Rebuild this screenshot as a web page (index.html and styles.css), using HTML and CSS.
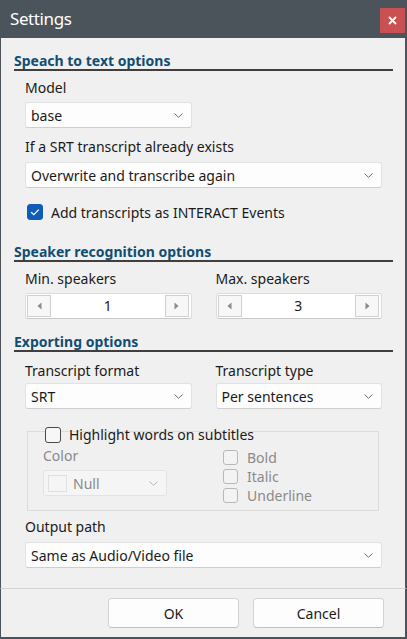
FILE: index.html
```html
<!DOCTYPE html>
<html>
<head>
<meta charset="utf-8">
<link rel="stylesheet" href="styles.css">
</head>
<body>
<div class="window">
  <div class="titlebar">
    <span class="title">Settings</span>
    <div class="close"><svg width="9" height="9" viewBox="0 0 9 9"><path d="M1 1L8 8M8 1L1 8" stroke="#fff" stroke-width="1.8"/></svg></div>
  </div>
  <div class="content">
    <div class="section s1">Speach to text options</div>
    <div class="field">
      <div class="label m7">Model</div>
      <div class="grid2 m4">
        <div class="combo"><span>base</span><svg class="chev" width="9" height="5" viewBox="0 0 9 5"><path d="M0.5 0.5L4.5 4.3L8.5 0.5" fill="none" stroke="#6b6b6b"/></svg></div>
      </div>
      <div class="label m9">If a SRT transcript already exists</div>
      <div class="combo m5"><span>Overwrite and transcribe again</span><svg class="chev" width="9" height="5" viewBox="0 0 9 5"><path d="M0.5 0.5L4.5 4.3L8.5 0.5" fill="none" stroke="#6b6b6b"/></svg></div>
      <div class="checkrow m14">
        <span class="cb checked"><svg width="16" height="16" viewBox="0 0 16 16"><path d="M4.2 8.2L6.8 10.7L11.8 5.6" fill="none" stroke="#fff" stroke-width="1.3"/></svg></span>
        <span>Add transcripts as INTERACT Events</span>
      </div>
    </div>

    <div class="section s2">Speaker recognition options</div>
    <div class="field">
      <div class="grid2 m7">
        <div class="label">Min. speakers</div>
        <div class="label">Max. speakers</div>
      </div>
      <div class="grid2 m4">
        <div class="spin">
          <span class="sbtn"><svg width="5" height="8" viewBox="0 0 5 8"><path d="M4.5 0.5V7.5L0.5 4Z" fill="#8a8a8a"/></svg></span>
          <span class="sval">1</span>
          <span class="sbtn"><svg width="5" height="8" viewBox="0 0 5 8"><path d="M0.5 0.5V7.5L4.5 4Z" fill="#8a8a8a"/></svg></span>
        </div>
        <div class="spin">
          <span class="sbtn"><svg width="5" height="8" viewBox="0 0 5 8"><path d="M4.5 0.5V7.5L0.5 4Z" fill="#8a8a8a"/></svg></span>
          <span class="sval">3</span>
          <span class="sbtn"><svg width="5" height="8" viewBox="0 0 5 8"><path d="M0.5 0.5V7.5L4.5 4Z" fill="#8a8a8a"/></svg></span>
        </div>
      </div>
    </div>

    <div class="section s3">Exporting options</div>
    <div class="field">
      <div class="grid2 m9">
        <div class="label">Transcript format</div>
        <div class="label">Transcript type</div>
      </div>
      <div class="grid2 m2">
        <div class="combo"><span>SRT</span><svg class="chev" width="9" height="5" viewBox="0 0 9 5"><path d="M0.5 0.5L4.5 4.3L8.5 0.5" fill="none" stroke="#6b6b6b"/></svg></div>
        <div class="combo"><span>Per sentences</span><svg class="chev" width="9" height="5" viewBox="0 0 9 5"><path d="M0.5 0.5L4.5 4.3L8.5 0.5" fill="none" stroke="#6b6b6b"/></svg></div>
      </div>
      <div class="group">
        <div class="ghead">
          <span class="cb"></span>
          <span>Highlight words on subtitles</span>
        </div>
        <div class="gbody">
          <div class="gleft">
            <div class="label dis">Color</div>
            <div class="combo disabled m4"><span class="swatch"></span><span class="dis">Null</span><svg class="chev" width="9" height="5" viewBox="0 0 9 5"><path d="M0.5 0.5L4.5 4.3L8.5 0.5" fill="none" stroke="#b5b5b5"/></svg></div>
          </div>
          <div class="gright">
            <div class="drow"><span class="cb dcb"></span><span class="dis">Bold</span></div>
            <div class="drow"><span class="cb dcb"></span><span class="dis">Italic</span></div>
            <div class="drow"><span class="cb dcb"></span><span class="dis">Underline</span></div>
          </div>
        </div>
      </div>
      <div class="label m6">Output path</div>
      <div class="combo m5"><span>Same as Audio/Video file</span><svg class="chev" width="9" height="5" viewBox="0 0 9 5"><path d="M0.5 0.5L4.5 4.3L8.5 0.5" fill="none" stroke="#6b6b6b"/></svg></div>
    </div>
  </div>
  <div class="footer">
    <div class="btn">OK</div>
    <div class="btn">Cancel</div>
  </div>
</div>
</body>
</html>
```

FILE: styles.css
```css
* { box-sizing: border-box; }
html, body { margin: 0; padding: 0; background: #f0f0f0; }
body { font-family: "Noto Sans", "Open Sans", sans-serif; font-size: 14px; color: #1a1a1a; }

.window { width: 407px; height: 639px; display: flex; flex-direction: column; background: #f0f0f0; }

.titlebar { height: 38px; flex: none; background: #4b535b; display: flex; align-items: center; padding-left: 10px; }
.title { color: #fff; font-size: 17px; letter-spacing: -0.4px; line-height: 22px; margin-top: -1px; }
.close { margin-left: auto; margin-right: 2px; width: 25px; height: 25px; background: #c95151; display: flex; align-items: center; justify-content: center; margin-top: 5px; margin-bottom: 3px; }

.content { flex: 1; border-left: 1px solid #4b535b; border-right: 2px solid #4b535b; padding: 0 12px 0 13px; }

.section { font-weight: bold; color: #114e73; line-height: 16px; padding-top: 1px; border-bottom: 2px solid #3f3f3f; }
.s1 { margin-top: 14px; }
.s2 { margin-top: 21px; }
.s3 { margin-top: 14px; }

.field { margin: 0 11px; }
.label { line-height: 20px; white-space: nowrap; }
.m2 { margin-top: 2px; } .m4 { margin-top: 4px; } .m5 { margin-top: 5px; } .m6 { margin-top: 6px; }
.m7 { margin-top: 7px; } .m9 { margin-top: 9px; } .m14 { margin-top: 14px; }

.grid2 { display: grid; grid-template-columns: 1fr 1fr; column-gap: 24px; }

.combo { height: 26px; background: #fdfdfd; border: 1px solid #e2e2e2; border-bottom-color: #cfcfcf; border-radius: 3px; display: flex; align-items: center; padding: 0 8px 0 5px; white-space: nowrap; }
.combo .chev { margin-left: auto; }
.combo.disabled { width: 124px; background: #f5f5f5; border-color: #e3e3e3; padding-left: 4px; }
.swatch { width: 19px; height: 17px; border: 1px solid #e0e0e0; background: #f5f5f5; margin-right: 6px; }

.checkrow { display: flex; align-items: center; height: 20px; padding-left: 2px; }
.cb { width: 16px; height: 16px; border: 1px solid #4a4a4a; border-radius: 3px; background: #f7f7f7; flex: none; }
.cb.checked { background: #0f5cb6; border-color: #0f5cb6; display: flex; }
.cb.checked svg { margin: -1px; }
.checkrow .cb { margin-right: 8px; }

.spin { height: 26px; background: #fff; border: 1px solid #dcdcdc; border-bottom-color: #c8c8c8; border-radius: 3px; display: flex; align-items: center; padding: 0 2px 0 1px; }
.sbtn { width: 24px; height: 22px; border: 1px solid #d0d0d0; background: #f7f7f7; display: flex; align-items: center; justify-content: center; flex: none; }
.sval { flex: 1; text-align: center; line-height: 20px; }

.group { margin: 22px 3px 0 2px; height: 80px; border: 1px solid #dcdcdc; }
.ghead { display: flex; align-items: center; height: 16px; margin-top: -5px; padding-left: 17px; line-height: 16px; }
.ghead .cb { margin-right: 8px; }
.gbody { display: flex; padding-left: 15px; }
.gleft { margin-top: 3px; width: 180px; }
.gright { margin-top: 5px; }
.drow { height: 19px; display: flex; align-items: center; line-height: 19px; }
.dcb { width: 15px; height: 15px; border-color: #b8b8b8; background: #f3f3f3; margin-right: 9px; }
.dis { color: #8a8a8a; }

.footer { height: 51px; flex: none; border-left: 1px solid #4b535b; border-right: 2px solid #4b535b; border-bottom: 2px solid #4b535b; border-top: 1px solid #d4d4d4; display: flex; justify-content: flex-end; padding: 9px 21px 0 0; gap: 14px; }
.btn { width: 131px; height: 30px; background: #fdfdfd; border: 1px solid #d3d3d3; border-bottom-color: #c0c0c0; border-radius: 4px; display: flex; align-items: center; justify-content: center; }
```
